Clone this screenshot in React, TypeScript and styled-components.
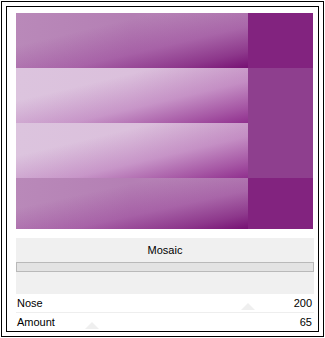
import React from "react";
import styled, { createGlobalStyle } from "styled-components";

const Global = createGlobalStyle`
  html, body {
    margin: 0;
    padding: 0;
    background: #ffffff;
  }
`;

const Outer = styled.div`
  box-sizing: border-box;
  width: 323px;
  height: 336px;
  margin: 1px;
  border: 1px solid #000;
  padding: 4px;
  font-family: "Liberation Sans", Arial, sans-serif;
  font-size: 11px;
  color: #000;
`;

const Inner = styled.div`
  box-sizing: border-box;
  height: 100%;
  border: 1px solid #000;
  padding: 6px 4px 0 9px;
  display: flex;
  flex-direction: column;
`;

const Preview = styled.div`
  display: grid;
  grid-template-columns: 232px 65px;
  grid-template-rows: 55px 55px 55px 51px;
`;

const Strip = styled.div<{ $light?: boolean }>`
  background: ${(p) =>
    p.$light
      ? `linear-gradient(to bottom right, rgba(165,75,165,0) 0%, rgba(165,75,165,0) 30%, rgba(170,85,170,0.4) 62%, rgba(150,55,148,0.75) 85%, rgba(140,40,138,0.95) 100%),
         linear-gradient(90deg, #dcc4de 0%, #dbc0dc 50%, #d4b2d4 100%)`
      : `linear-gradient(to bottom right, rgba(150,60,150,0) 0%, rgba(150,60,150,0) 30%, rgba(150,60,150,0.45) 62%, rgba(130,35,128,0.8) 85%, rgba(118,16,115,1) 100%),
         linear-gradient(90deg, #b989b9 0%, #b47fb4 50%, #b98bb9 100%)`};
`;

const Block = styled.div<{ $light?: boolean }>`
  background: ${(p) => (p.$light ? "#8e3f8e" : "#82237f")};
`;

const Panel = styled.div`
  margin-top: 9px;
  background: #f0f0f0;
  height: 56px;
  display: flex;
  flex-direction: column;
`;

const Title = styled.div`
  height: 24px;
  line-height: 24px;
  text-align: center;
`;

const Bar = styled.div`
  box-sizing: border-box;
  height: 10px;
  background: #e3e3e3;
  border: 1px solid #b9b9b9;
`;

const Row = styled.div<{ $sep?: boolean }>`
  position: relative;
  height: 18px;
  display: flex;
  align-items: center;
  justify-content: space-between;
  padding: 0 2px 0 1px;
  background: #fff;
  border-top: ${(p) => (p.$sep ? "1px solid #eeeeee" : "none")};
`;

const Label = styled.span`
  position: relative;
  z-index: 1;
`;

const Thumb = styled.div`
  position: absolute;
  bottom: 2px;
  width: 0;
  height: 0;
  margin-left: -7px;
  border-left: 7px solid transparent;
  border-right: 7px solid transparent;
  border-bottom: 7px solid #efefef;
`;

const rows = [
  { name: "Nose", value: 200, pos: 78 },
  { name: "Amount", value: 65, pos: 25.5 },
];

export default function App() {
  return (
    <>
      <Global />
      <Outer>
        <Inner>
          <Preview>
            <Strip />
            <Block />
            <Strip $light />
            <Block $light />
            <Strip $light />
            <Block $light />
            <Strip />
            <Block />
          </Preview>
          <Panel>
            <Title>Mosaic</Title>
            <Bar />
          </Panel>
          {rows.map((r, i) => (
            <Row key={r.name} $sep={i > 0}>
              <Thumb style={{ left: `${r.pos}%` }} />
              <Label>{r.name}</Label>
              <Label>{r.value}</Label>
            </Row>
          ))}
        </Inner>
      </Outer>
    </>
  );
}
